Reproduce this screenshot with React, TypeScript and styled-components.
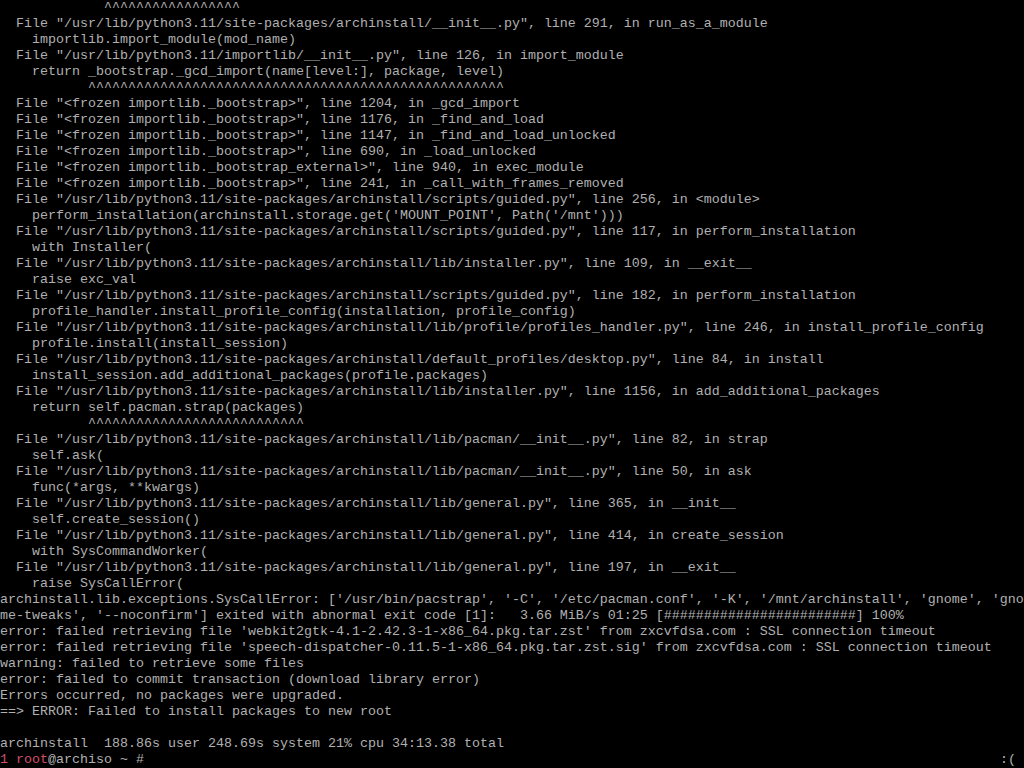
import React from "react";
import styled, { createGlobalStyle } from "styled-components";

const Global = createGlobalStyle`
  html, body {
    margin: 0;
    padding: 0;
    background: #000;
  }
`;

const Screen = styled.div`
  width: 1024px;
  height: 768px;
  overflow: hidden;
  background: #000;
  color: #b0b0b0;
  font-family: "Liberation Mono", "DejaVu Sans Mono", monospace;
  font-size: 13.33px;
  line-height: 16px;
  display: flex;
  flex-direction: column;
`;

const Line = styled.div`
  height: 16px;
  white-space: pre;
  overflow: hidden;
`;

const PromptLine = styled.div`
  height: 16px;
  white-space: pre;
  display: flex;
  justify-content: space-between;
`;

const Hot = styled.span`
  color: #d24f6c;
`;

const lines: string[] = [
  "             ^^^^^^^^^^^^^^^^^",
  '  File "/usr/lib/python3.11/site-packages/archinstall/__init__.py", line 291, in run_as_a_module',
  "    importlib.import_module(mod_name)",
  '  File "/usr/lib/python3.11/importlib/__init__.py", line 126, in import_module',
  "    return _bootstrap._gcd_import(name[level:], package, level)",
  "           " + "^".repeat(52),
  '  File "<frozen importlib._bootstrap>", line 1204, in _gcd_import',
  '  File "<frozen importlib._bootstrap>", line 1176, in _find_and_load',
  '  File "<frozen importlib._bootstrap>", line 1147, in _find_and_load_unlocked',
  '  File "<frozen importlib._bootstrap>", line 690, in _load_unlocked',
  '  File "<frozen importlib._bootstrap_external>", line 940, in exec_module',
  '  File "<frozen importlib._bootstrap>", line 241, in _call_with_frames_removed',
  '  File "/usr/lib/python3.11/site-packages/archinstall/scripts/guided.py", line 256, in <module>',
  "    perform_installation(archinstall.storage.get('MOUNT_POINT', Path('/mnt')))",
  '  File "/usr/lib/python3.11/site-packages/archinstall/scripts/guided.py", line 117, in perform_installation',
  "    with Installer(",
  '  File "/usr/lib/python3.11/site-packages/archinstall/lib/installer.py", line 109, in __exit__',
  "    raise exc_val",
  '  File "/usr/lib/python3.11/site-packages/archinstall/scripts/guided.py", line 182, in perform_installation',
  "    profile_handler.install_profile_config(installation, profile_config)",
  '  File "/usr/lib/python3.11/site-packages/archinstall/lib/profile/profiles_handler.py", line 246, in install_profile_config',
  "    profile.install(install_session)",
  '  File "/usr/lib/python3.11/site-packages/archinstall/default_profiles/desktop.py", line 84, in install',
  "    install_session.add_additional_packages(profile.packages)",
  '  File "/usr/lib/python3.11/site-packages/archinstall/lib/installer.py", line 1156, in add_additional_packages',
  "    return self.pacman.strap(packages)",
  "           " + "^".repeat(27),
  '  File "/usr/lib/python3.11/site-packages/archinstall/lib/pacman/__init__.py", line 82, in strap',
  "    self.ask(",
  '  File "/usr/lib/python3.11/site-packages/archinstall/lib/pacman/__init__.py", line 50, in ask',
  "    func(*args, **kwargs)",
  '  File "/usr/lib/python3.11/site-packages/archinstall/lib/general.py", line 365, in __init__',
  "    self.create_session()",
  '  File "/usr/lib/python3.11/site-packages/archinstall/lib/general.py", line 414, in create_session',
  "    with SysCommandWorker(",
  '  File "/usr/lib/python3.11/site-packages/archinstall/lib/general.py", line 197, in __exit__',
  "    raise SysCallError(",
  "archinstall.lib.exceptions.SysCallError: ['/usr/bin/pacstrap', '-C', '/etc/pacman.conf', '-K', '/mnt/archinstall', 'gnome', 'gno",
  "me-tweaks', '--noconfirm'] exited with abnormal exit code [1]:   3.66 MiB/s 01:25 [" + "#".repeat(24) + "] 100%",
  "error: failed retrieving file 'webkit2gtk-4.1-2.42.3-1-x86_64.pkg.tar.zst' from zxcvfdsa.com : SSL connection timeout",
  "error: failed retrieving file 'speech-dispatcher-0.11.5-1-x86_64.pkg.tar.zst.sig' from zxcvfdsa.com : SSL connection timeout",
  "warning: failed to retrieve some files",
  "error: failed to commit transaction (download library error)",
  "Errors occurred, no packages were upgraded.",
  "==> ERROR: Failed to install packages to new root",
  "",
  "archinstall  188.86s user 248.69s system 21% cpu 34:13.38 total",
];

export default function App() {
  return (
    <>
      <Global />
      <Screen>
        {lines.map((l, i) => (
          <Line key={i}>{l}</Line>
        ))}
        <PromptLine>
          <span>
            <Hot>1 root</Hot>@archiso ~ #
          </span>
          <span>:( </span>
        </PromptLine>
      </Screen>
    </>
  );
}
